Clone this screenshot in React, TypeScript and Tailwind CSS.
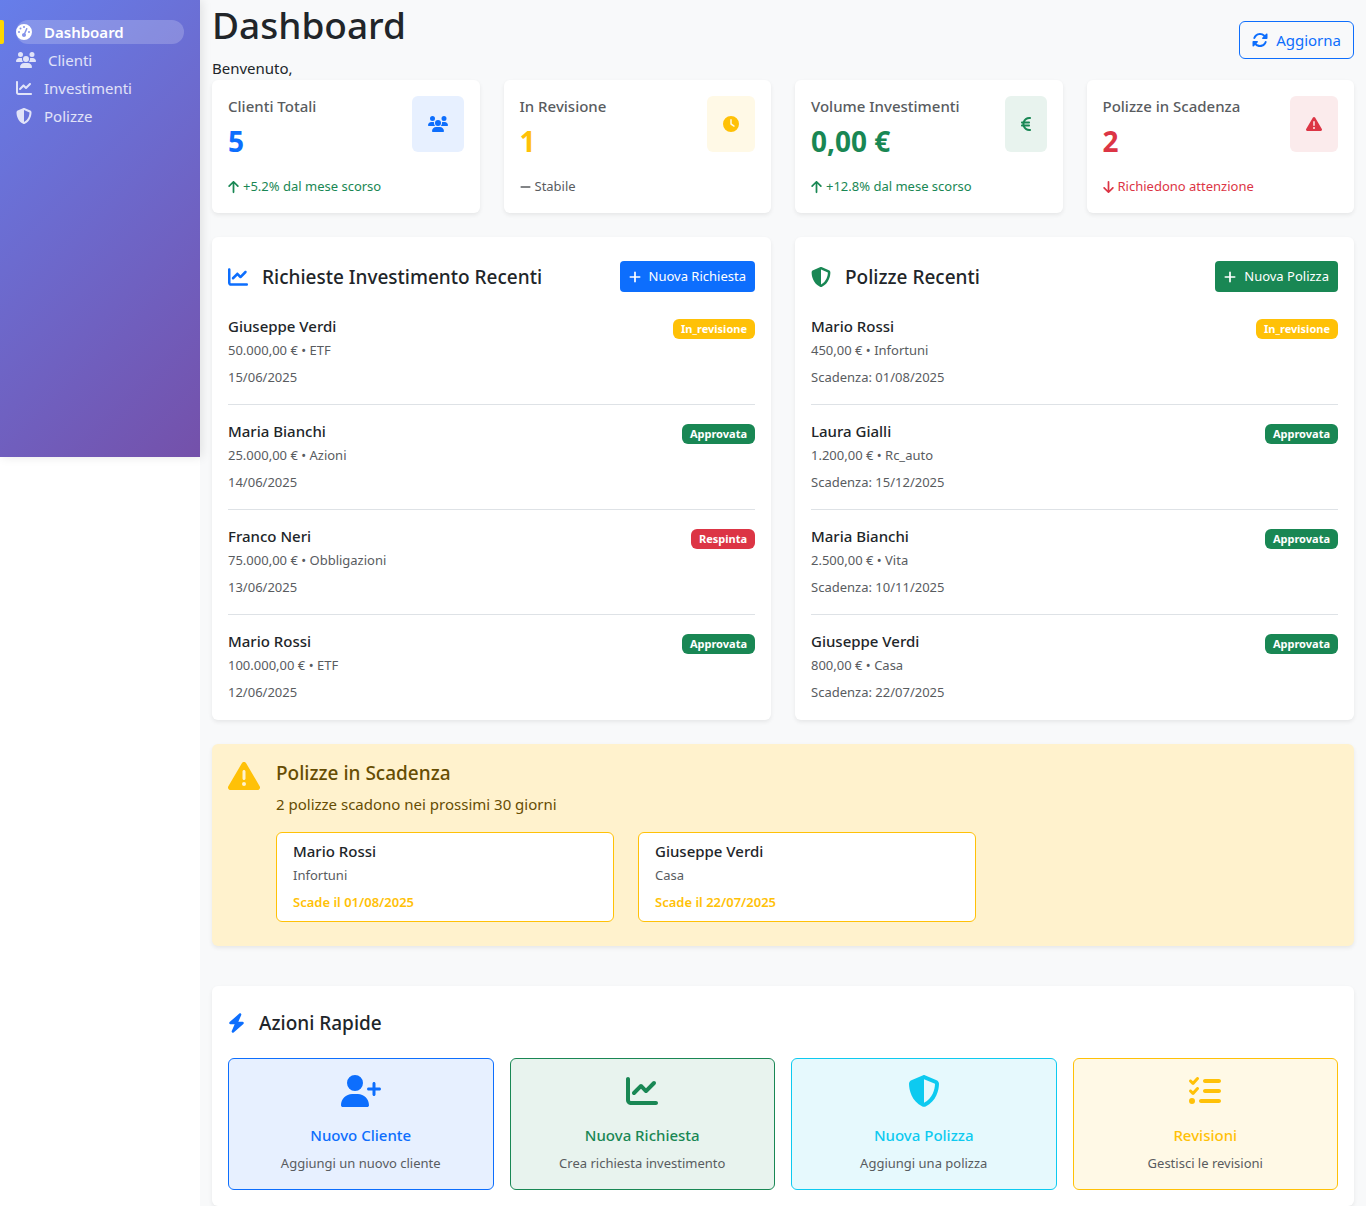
import type { ReactNode } from "react";
import type { IconType } from "react-icons";
import {
  FaArrowDown,
  FaArrowUp,
  FaBolt,
  FaChartLine,
  FaClock,
  FaEuroSign,
  FaGaugeHigh,
  FaListCheck,
  FaMinus,
  FaPlus,
  FaRotate,
  FaShieldHalved,
  FaTriangleExclamation,
  FaUserPlus,
  FaUsers,
} from "react-icons/fa6";

const navItems: { label: string; icon: IconType; iconSize: string; active?: boolean }[] = [
  { label: "Dashboard", icon: FaGaugeHigh, iconSize: "h-4 w-4", active: true },
  { label: "Clienti", icon: FaUsers, iconSize: "h-4 w-5" },
  { label: "Investimenti", icon: FaChartLine, iconSize: "h-4 w-4" },
  { label: "Polizze", icon: FaShieldHalved, iconSize: "h-4 w-4" },
];

type Stat = {
  title: string;
  value: string;
  color: string;
  tint: string;
  icon: IconType;
  iconSize: string;
  trend: string;
  trendIcon: IconType;
  trendColor: string;
};

const stats: Stat[] = [
  { title: "Clienti Totali", value: "5", color: "text-[#0d6efd]", tint: "bg-[#e7f0ff]", icon: FaUsers, iconSize: "h-4 w-5", trend: "+5.2% dal mese scorso", trendIcon: FaArrowUp, trendColor: "text-[#198754]" },
  { title: "In Revisione", value: "1", color: "text-[#ffc107]", tint: "bg-[#fff9e6]", icon: FaClock, iconSize: "h-4 w-4", trend: "Stabile", trendIcon: FaMinus, trendColor: "text-[#595c5f]" },
  { title: "Volume Investimenti", value: "0,00 €", color: "text-[#198754]", tint: "bg-[#e8f3ee]", icon: FaEuroSign, iconSize: "h-4 w-2.5", trend: "+12.8% dal mese scorso", trendIcon: FaArrowUp, trendColor: "text-[#198754]" },
  { title: "Polizze in Scadenza", value: "2", color: "text-[#dc3545]", tint: "bg-[#fbebec]", icon: FaTriangleExclamation, iconSize: "h-4 w-4", trend: "Richiedono attenzione", trendIcon: FaArrowDown, trendColor: "text-[#dc3545]" },
];

type Status = "In_revisione" | "Approvata" | "Respinta";
type Entry = { name: string; detail: string; date: string; status: Status };

const statusColor: Record<Status, string> = {
  In_revisione: "bg-[#ffc107]",
  Approvata: "bg-[#198754]",
  Respinta: "bg-[#dc3545]",
};

const requests: Entry[] = [
  { name: "Giuseppe Verdi", detail: "50.000,00 € • ETF", date: "15/06/2025", status: "In_revisione" },
  { name: "Maria Bianchi", detail: "25.000,00 € • Azioni", date: "14/06/2025", status: "Approvata" },
  { name: "Franco Neri", detail: "75.000,00 € • Obbligazioni", date: "13/06/2025", status: "Respinta" },
  { name: "Mario Rossi", detail: "100.000,00 € • ETF", date: "12/06/2025", status: "Approvata" },
];

const policies: Entry[] = [
  { name: "Mario Rossi", detail: "450,00 € • Infortuni", date: "Scadenza: 01/08/2025", status: "In_revisione" },
  { name: "Laura Gialli", detail: "1.200,00 € • Rc_auto", date: "Scadenza: 15/12/2025", status: "Approvata" },
  { name: "Maria Bianchi", detail: "2.500,00 € • Vita", date: "Scadenza: 10/11/2025", status: "Approvata" },
  { name: "Giuseppe Verdi", detail: "800,00 € • Casa", date: "Scadenza: 22/07/2025", status: "Approvata" },
];

const expiring = [
  { name: "Mario Rossi", kind: "Infortuni", date: "Scade il 01/08/2025" },
  { name: "Giuseppe Verdi", kind: "Casa", date: "Scade il 22/07/2025" },
];

const actions: { title: string; text: string; icon: IconType; iconSize: string; style: string }[] = [
  { title: "Nuovo Cliente", text: "Aggiungi un nuovo cliente", icon: FaUserPlus, iconSize: "h-8 w-10", style: "border-[#0d6efd] bg-[#e7f0ff] text-[#0d6efd]" },
  { title: "Nuova Richiesta", text: "Crea richiesta investimento", icon: FaChartLine, iconSize: "h-8 w-8", style: "border-[#198754] bg-[#e8f3ee] text-[#198754]" },
  { title: "Nuova Polizza", text: "Aggiungi una polizza", icon: FaShieldHalved, iconSize: "h-8 w-8", style: "border-[#0dcaf0] bg-[#e6f9fd] text-[#0dcaf0]" },
  { title: "Revisioni", text: "Gestisci le revisioni", icon: FaListCheck, iconSize: "h-8 w-8", style: "border-[#ffc107] bg-[#fff9e6] text-[#ffc107]" },
];

function Sidebar() {
  return (
    <nav className="h-[457px] w-[200px] shrink-0 bg-[linear-gradient(135deg,#667eea_0%,#764ba2_112%)] px-4 pt-5 shadow-[2px_0_10px_rgba(0,0,0,0.1)]">
      <ul className="flex flex-col gap-1">
        {navItems.map(({ label, icon: Icon, iconSize, active }) => (
          <li key={label} className="relative">
            {active && <span className="absolute top-0 -left-4 h-full w-1 rounded-r-xs bg-[#ffd700]" />}
            <a
              href="#"
              aria-current={active ? "page" : undefined}
              className={
                active
                  ? "flex items-center gap-3 rounded-xl bg-white/20 text-[15px] leading-6 font-semibold text-white"
                  : "flex items-center gap-3 rounded-xl text-[15px] leading-6 text-white/80"
              }
            >
              <Icon className={`shrink-0 ${iconSize}`} />
              {label}
            </a>
          </li>
        ))}
      </ul>
    </nav>
  );
}

function Card({ className, children }: { className: string; children: ReactNode }) {
  return <section className={`rounded-md bg-white shadow-[0_2px_4px_rgba(0,0,0,0.075)] ${className}`}>{children}</section>;
}

function StatCard({ stat }: { stat: Stat }) {
  const Icon = stat.icon;
  const TrendIcon = stat.trendIcon;
  return (
    <Card className="flex flex-col justify-between p-4">
      <div className="flex items-start justify-between">
        <div>
          <h2 className="text-[15px] leading-5 font-medium text-[#595c5f]">{stat.title}</h2>
          <p className={`mt-2 text-[28px] leading-[34px] font-bold ${stat.color}`}>{stat.value}</p>
        </div>
        <div className={`flex h-14 items-center rounded-md px-4 ${stat.tint} ${stat.color}`}>
          <Icon className={stat.iconSize} />
        </div>
      </div>
      <p className={`mt-[18px] flex items-center gap-1 text-[13px] leading-[21px] ${stat.trendColor}`}>
        <TrendIcon className="h-3.5 w-[11px]" />
        {stat.trend}
      </p>
    </Card>
  );
}

function SectionTitle({ icon: Icon, iconStyle, children }: { icon: IconType; iconStyle: string; children: ReactNode }) {
  return (
    <h2 className="flex items-center gap-3.5 text-[19px] leading-[26px] font-medium">
      <Icon className={`shrink-0 ${iconStyle}`} />
      {children}
    </h2>
  );
}

function EntryList(props: { title: string; icon: IconType; iconStyle: string; action: string; actionColor: string; entries: Entry[] }) {
  return (
    <Card className="px-4 pt-6 pb-[17px]">
      <div className="mb-6 flex items-center justify-between">
        <SectionTitle icon={props.icon} iconStyle={props.iconStyle}>
          {props.title}
        </SectionTitle>
        <button type="button" className={`flex h-[31px] items-center gap-2 rounded px-[9px] text-[13px] text-white ${props.actionColor}`}>
          <FaPlus className="h-3.5 w-3" />
          {props.action}
        </button>
      </div>
      <ul className="divide-y divide-[#dee2e6]">
        {props.entries.map((entry) => (
          <li key={entry.name} className="flex items-start justify-between py-4 first:pt-0 last:pb-0">
            <div>
              <h3 className="text-[15px] leading-5 font-medium">{entry.name}</h3>
              <p className="mt-1 text-[13px] leading-[21px] text-[#595c5f]">{entry.detail}</p>
              <p className="mt-1.5 text-[13px] leading-[21px] text-[#595c5f]">{entry.date}</p>
            </div>
            <span className={`mt-[3px] rounded-md px-2 text-[11px] leading-5 font-bold text-white ${statusColor[entry.status]}`}>
              {entry.status}
            </span>
          </li>
        ))}
      </ul>
    </Card>
  );
}

export default function App() {
  return (
    <div className="flex min-h-screen bg-white font-['Noto_Sans','Open_Sans',sans-serif] text-[15px] text-[#212529]">
      <div className="relative z-10 w-[200px] shrink-0">
        <Sidebar />
      </div>
      <main className="min-w-0 flex-1 bg-[#f8f9fa] px-3">
        <header className="flex h-20 items-center justify-between">
          <div>
            <h1 className="text-[37px] leading-[50px] font-medium">Dashboard</h1>
            <p className="mt-1.5 leading-6">Benvenuto,</p>
          </div>
          <button type="button" className="flex h-[38px] items-center gap-2 rounded-md border border-[#0d6efd] px-3 text-[#0d6efd]">
            <FaRotate className="h-4 w-4" />
            Aggiorna
          </button>
        </header>

        <div className="grid grid-cols-4 gap-6">
          {stats.map((stat) => (
            <StatCard key={stat.title} stat={stat} />
          ))}
        </div>

        <div className="mt-6 grid grid-cols-2 gap-6">
          <EntryList
            title="Richieste Investimento Recenti"
            icon={FaChartLine}
            iconStyle="h-5 w-5 text-[#0d6efd]"
            action="Nuova Richiesta"
            actionColor="bg-[#0d6efd]"
            entries={requests}
          />
          <EntryList
            title="Polizze Recenti"
            icon={FaShieldHalved}
            iconStyle="h-5 w-5 text-[#198754]"
            action="Nuova Polizza"
            actionColor="bg-[#198754]"
            entries={policies}
          />
        </div>

        <section className="mt-6 flex gap-4 rounded-md bg-[#fff2cd] px-4 pt-4 pb-6 text-[#664d03] shadow-[0_2px_4px_rgba(0,0,0,0.075)]">
          <FaTriangleExclamation className="h-8 w-8 shrink-0 text-[#ffc107]" />
          <div className="flex-1">
            <h2 className="text-[19px] leading-[26px] font-medium">Polizze in Scadenza</h2>
            <p className="mt-1.5 leading-6">2 polizze scadono nei prossimi 30 giorni</p>
            <div className="mt-4 grid grid-cols-3 gap-6">
              {expiring.map((item) => (
                <div key={item.name} className="rounded-md border border-[#ffc107] bg-white px-4 py-2">
                  <h3 className="leading-5 font-medium text-[#212529]">{item.name}</h3>
                  <p className="mt-1 text-[13px] leading-[21px] text-[#595c5f]">{item.kind}</p>
                  <p className="mt-1.5 text-[13px] leading-[21px] font-semibold text-[#ffc107]">{item.date}</p>
                </div>
              ))}
            </div>
          </div>
        </section>

        <Card className="mt-10 px-4 pt-6 pb-4">
          <SectionTitle icon={FaBolt} iconStyle="h-5 w-[17px] text-[#0d6efd]">
            Azioni Rapide
          </SectionTitle>
          <div className="mt-[22px] grid grid-cols-4 gap-4">
            {actions.map(({ title, text, icon: Icon, iconSize, style }) => (
              <button key={title} type="button" className={`flex flex-col items-center rounded-md border px-4 pt-4 pb-3.5 ${style}`}>
                <Icon className={iconSize} />
                <span className="mt-4 leading-6 font-medium">{title}</span>
                <span className="mt-1 text-[13px] leading-6 text-[#595c5f]">{text}</span>
              </button>
            ))}
          </div>
        </Card>
      </main>
    </div>
  );
}
